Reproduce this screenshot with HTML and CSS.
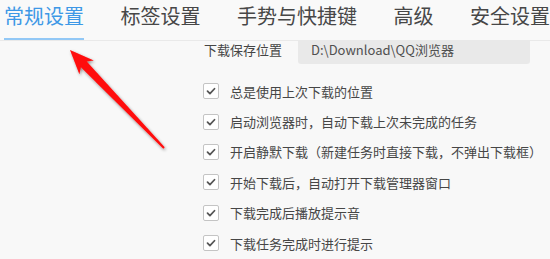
FILE: index.html
```html
<!DOCTYPE html>
<html lang="zh-CN">
<head>
<meta charset="utf-8">
<title>设置</title>
<link rel="stylesheet" href="styles.css">
</head>
<body>
<div class="page">
  <nav class="tabs">
    <div class="tab active">常规设置</div>
    <div class="tab">标签设置</div>
    <div class="tab">手势与快捷键</div>
    <div class="tab">高级</div>
    <div class="tab">安全设置</div>
  </nav>
  <section class="content">
    <div class="path-row">
      <span class="path-label">下载保存位置</span>
      <div class="path-input">D:\Download\QQ浏览器</div>
    </div>
    <ul class="options">
      <li class="option"><span class="check"><svg viewBox="0 0 16 16"><path d="M4 8.2 L6.8 11 L12 5.4"/></svg></span><span>总是使用上次下载的位置</span></li>
      <li class="option"><span class="check"><svg viewBox="0 0 16 16"><path d="M4 8.2 L6.8 11 L12 5.4"/></svg></span><span>启动浏览器时，自动下载上次未完成的任务</span></li>
      <li class="option"><span class="check"><svg viewBox="0 0 16 16"><path d="M4 8.2 L6.8 11 L12 5.4"/></svg></span><span>开启静默下载（新建任务时直接下载，不弹出下载框）</span></li>
      <li class="option"><span class="check"><svg viewBox="0 0 16 16"><path d="M4 8.2 L6.8 11 L12 5.4"/></svg></span><span>开始下载后，自动打开下载管理器窗口</span></li>
      <li class="option"><span class="check"><svg viewBox="0 0 16 16"><path d="M4 8.2 L6.8 11 L12 5.4"/></svg></span><span>下载完成后播放提示音</span></li>
      <li class="option"><span class="check"><svg viewBox="0 0 16 16"><path d="M4 8.2 L6.8 11 L12 5.4"/></svg></span><span>下载任务完成时进行提示</span></li>
    </ul>
  </section>
  <svg class="arrow" viewBox="0 0 550 259" width="550" height="259">
    <defs>
      <filter id="sh" x="-20%" y="-20%" width="140%" height="140%">
        <feDropShadow dx="1" dy="1.5" stdDeviation="1.6" flood-color="#000" flood-opacity="0.45"/>
      </filter>
    </defs>
    <polygon filter="url(#sh)" fill="#ff0a0a" points="70,50 93.8,60.4 86.7,61.6 164.7,147.3 163.3,148.7 80.9,67.2 79.4,74.2"/>
  </svg>
</div>
</body>
</html>
```
FILE: styles.css
```css
html, body {
  margin: 0;
  padding: 0;
}
body {
  background: #f8f8f8;
  font-family: "Noto Sans CJK SC", "Noto Sans", sans-serif;
  width: 550px;
  height: 259px;
  overflow: hidden;
}
.page {
  position: relative;
  width: 550px;
  height: 259px;
  overflow: hidden;
}
.tabs {
  display: flex;
  gap: 36.5px;
  height: 40px;
  padding-left: 4px;
  border-bottom: 1px solid #e9e9e9;
  background: #f9f9f9;
  white-space: nowrap;
}
.tab {
  box-sizing: border-box;
  height: 40px;
  font-size: 20px;
  line-height: 32px;
  color: #474747;
  flex: none;
}
.tab.active {
  color: #3e98e6;
  border-bottom: 2px solid #92c8f6;
}
.content {
  padding-left: 204px;
}
.path-row {
  display: flex;
  height: 23px;
  gap: 15px;
}
.path-label {
  font-size: 13px;
  line-height: 17px;
  color: #454545;
  width: 79px;
}
.path-input {
  width: 232px;
  height: 23px;
  box-sizing: border-box;
  padding-left: 13px;
  background: #e9e9e9;
  border-radius: 0 0 3px 3px;
  font-size: 13px;
  line-height: 17px;
  color: #505050;
  margin-top: 0;
}
.options {
  list-style: none;
  margin: 12px 0 0 -1px;
  padding: 0;
}
.option {
  display: flex;
  align-items: center;
  height: 30.4px;
  gap: 11px;
  font-size: 13px;
  color: #464646;
  white-space: nowrap;
}
.check {
  box-sizing: border-box;
  width: 16px;
  height: 16px;
  border: 1px solid #c4c4c4;
  border-radius: 2px;
  background: #fff;
  display: flex;
  flex: none;
}
.check svg {
  width: 14px;
  height: 14px;
}
.check path {
  fill: none;
  stroke: #555;
  stroke-width: 2;
  stroke-linecap: round;
  stroke-linejoin: round;
}
.arrow {
  position: absolute;
  left: 0;
  top: 0;
  pointer-events: none;
}
```
